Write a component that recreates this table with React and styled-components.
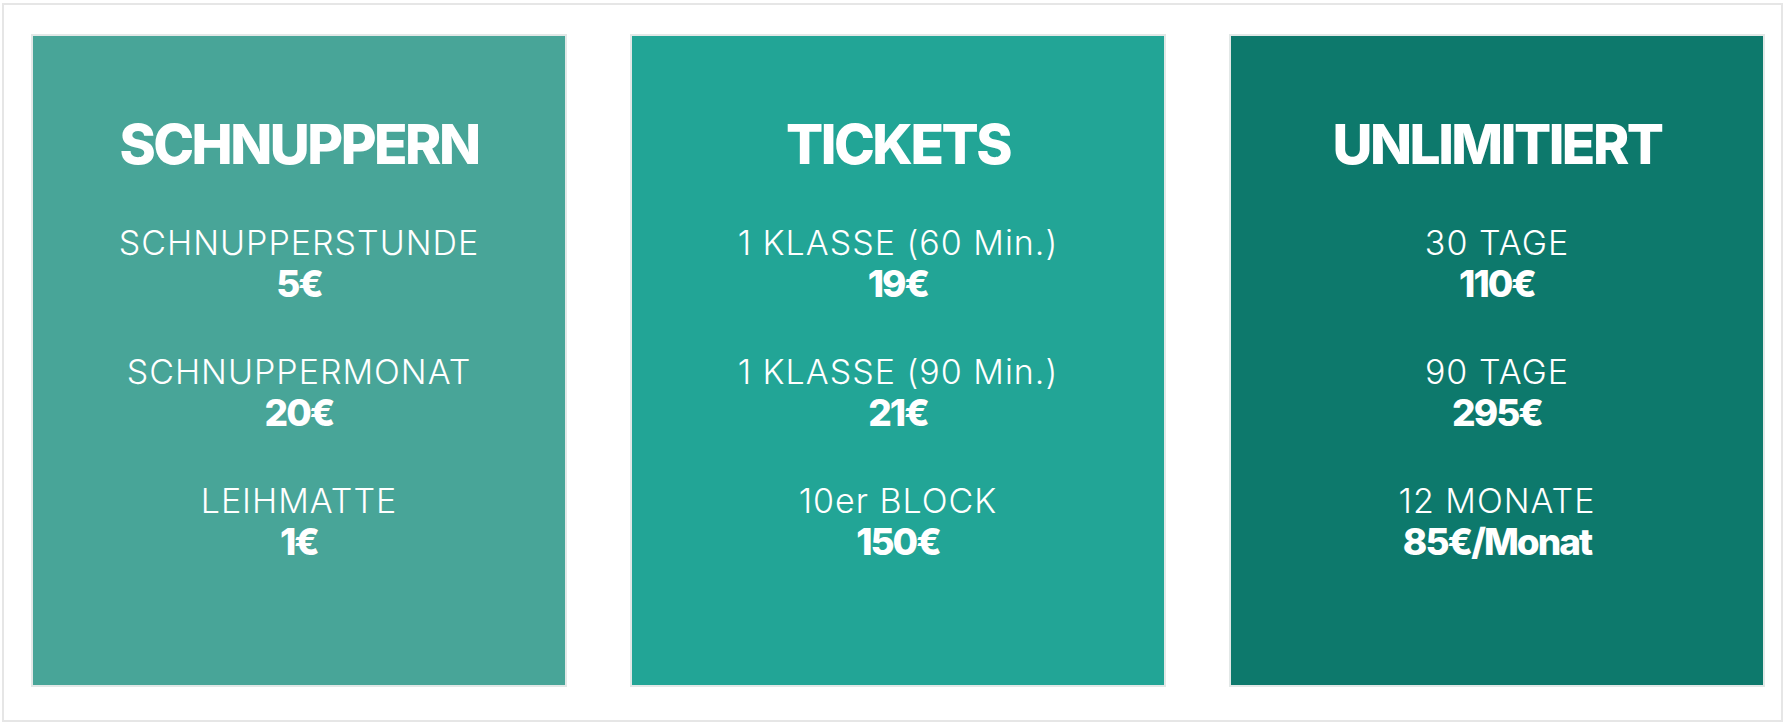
import React from 'react';
import styled, { createGlobalStyle } from 'styled-components';

const plans = [
    {
        title: 'SCHNUPPERN',
        color: '#48a598',
        items: [
            { label: 'SCHNUPPERSTUNDE', price: '5€' },
            { label: 'SCHNUPPERMONAT', price: '20€' },
            { label: 'LEIHMATTE', price: '1€' },
        ],
    },
    {
        title: 'TICKETS',
        color: '#22a596',
        items: [
            { label: '1 KLASSE (60 Min.)', price: '19€' },
            { label: '1 KLASSE (90 Min.)', price: '21€' },
            { label: '10er BLOCK', price: '150€' },
        ],
    },
    {
        title: 'UNLIMITIERT',
        color: '#0d796c',
        items: [
            { label: '30 TAGE', price: '110€' },
            { label: '90 TAGE', price: '295€' },
            { label: '12 MONATE', price: '85€/Monat' },
        ],
    },
];

const App = () => (
    <>
        <GlobalStyle />
        <Frame>
            {plans.map(plan => (
                <Card key={plan.title} bg={plan.color}>
                    <Title>{plan.title}</Title>
                    <ItemList>
                        {plan.items.map(item => (
                            <Item key={item.label}>
                                <Label>{item.label}</Label>
                                <Price>{item.price}</Price>
                            </Item>
                        ))}
                    </ItemList>
                </Card>
            ))}
        </Frame>
    </>
);

export default App;

const GlobalStyle = createGlobalStyle`
    html, body {
        margin: 0;
        padding: 0;
        background: #ffffff;
    }
    body {
        font-family: Inter, "Noto Sans", sans-serif;
    }
`;

const Frame = styled.div`
    box-sizing: border-box;
    width: 1781px;
    height: 719px;
    margin: 3px 0 0 2px;
    border: 2px solid #e6e6e6;
    padding: 29px 0 0 27px;
    display: flex;
    align-items: flex-start;
    gap: 63px;
`;

const Card = styled.div`
    box-sizing: border-box;
    width: 536px;
    height: 653px;
    border: 2px solid #e2e8e7;
    background: ${props => props.bg};
    padding-top: 80px;
    display: flex;
    flex-direction: column;
    align-items: center;
    color: #ffffff;
    text-align: center;
`;

const Title = styled.h2`
    margin: 0 0 50px;
    font-size: 55px;
    line-height: 56px;
    font-weight: 800;
    letter-spacing: -2.5px;
`;

const ItemList = styled.div`
    display: flex;
    flex-direction: column;
    gap: 47px;
`;

const Item = styled.div`
    display: flex;
    flex-direction: column;
    align-items: center;
`;

const Label = styled.div`
    font-size: 34px;
    line-height: 41px;
    font-weight: 300;
    letter-spacing: 1px;
`;

const Price = styled.div`
    font-size: 37px;
    line-height: 41px;
    font-weight: 800;
    letter-spacing: -2px;
`;
